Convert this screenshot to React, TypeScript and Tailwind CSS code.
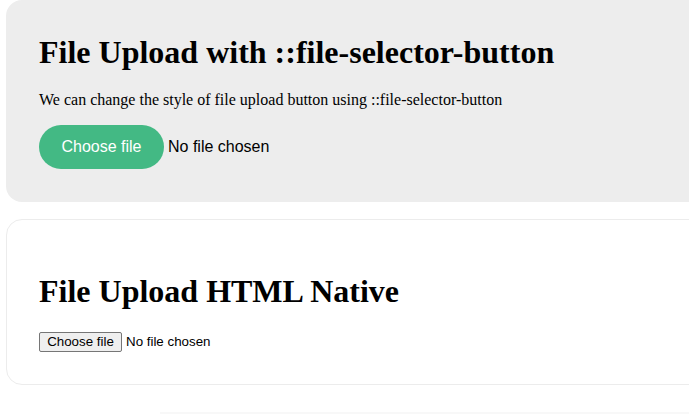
export default function App() {
  return (
    <div className="h-[414px] w-[689px] overflow-hidden bg-white font-['Liberation_Serif',serif] text-black">
      <div className="ml-[6px] w-[720px]">
        {/* styled ::file-selector-button */}
        <section className="rounded-2xl bg-[#ededed] px-[33px] pb-[33px] pt-[34px]">
          <h1 className="text-[32px] font-bold leading-[37px]">File Upload with ::file-selector-button</h1>
          <p className="mt-[20px] text-[16px] leading-[18px]">
            We can change the style of file upload button using ::file-selector-button
          </p>
          <div className="mt-[16px] flex items-center font-['Liberation_Sans',Arial,sans-serif] text-[16px]">
            <button className="h-[44px] w-[125px] rounded-full bg-[#43b984] text-white">Choose file</button>
            <span className="ml-[4px]">No file chosen</span>
          </div>
        </section>

        {/* native */}
        <section className="mt-[17px] rounded-2xl border border-[#ececec] px-[32px] pb-[32px] pt-[53px]">
          <h1 className="text-[32px] font-bold leading-[37px]">File Upload HTML Native</h1>
          <div className="mt-[22px] flex items-center font-['Liberation_Sans',Arial,sans-serif] text-[13.33px]">
            <button className="h-[20px] w-[83px] rounded-[2px] border border-[#767676] bg-[#efefef] leading-none">
              Choose file
            </button>
            <span className="ml-[4px]">No file chosen</span>
          </div>
        </section>
      </div>
      <div className="ml-[160px] mt-[27px] h-[2px] bg-[#f8f8f8]" />
    </div>
  );
}
